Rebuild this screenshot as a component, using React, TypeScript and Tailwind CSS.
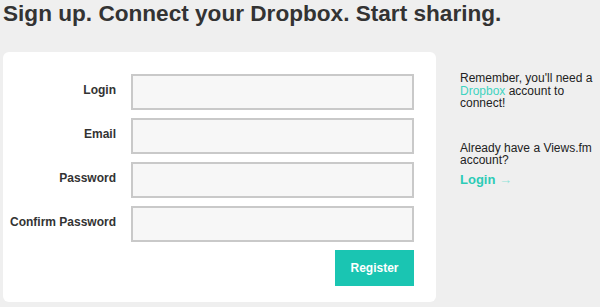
export default function App() {
  const fields = ['Login', 'Email', 'Password', 'Confirm Password'];

  return (
    <div className="min-h-[307px] w-[600px] bg-[#efefef] font-['Liberation_Sans',Arial,sans-serif] text-[#333]">
      <h1 className="pl-[3px] pt-[1px] text-[22.6px] font-bold leading-[26px] text-[#333]">
        Sign up. Connect your Dropbox. Start sharing.
      </h1>

      <div className="mt-[25px] flex items-start">
        <form className="ml-[3px] flex w-[433px] flex-col gap-[8px] rounded-[6px] bg-white pb-[16px] pr-[22px] pt-[22px]">
          {fields.map((f) => (
            <div key={f} className="flex items-center">
              <label className="mb-[4px] w-[116px] pr-[3px] text-right text-[12px] font-bold text-[#333]">{f}</label>
              <input
                type={f.includes('Password') ? 'password' : 'text'}
                className="ml-[12px] h-[36px] w-[283px] border-2 border-[#c9c9c9] bg-[#f7f7f7] px-2 outline-none"
              />
            </div>
          ))}
          <div className="flex justify-end">
            <button
              type="button"
              className="h-[36px] w-[79px] bg-[#1ac5b2] text-[12px] font-bold text-white"
            >
              Register
            </button>
          </div>
        </form>

        <div className="ml-[24px] pt-[20px] text-[12px] leading-[12.5px] text-[#222]">
          <p>
            Remember, you'll need a<br />
            <span className="text-[#3fd3c0]">Dropbox</span> account to<br />
            connect!
          </p>
          <p className="mt-[32px]">
            Already have a Views.fm<br />
            account?
          </p>
          <a className="mt-[7px] block text-[13px] font-bold text-[#2ccbb6]">
            Login <span className="font-normal text-[#8fe3d8]">→</span>
          </a>
        </div>
      </div>
    </div>
  );
}
